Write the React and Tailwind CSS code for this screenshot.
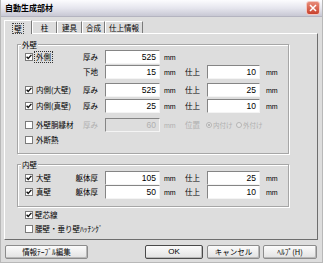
import React from "react";

const jp = "font-['Noto_Sans_CJK_JP',sans-serif]";
const lat = "font-['Liberation_Sans',Arial,sans-serif]";

function Check({ checked }) {
  return (
    <span className="w-[8px] h-[8px] shrink-0 bg-white border border-[#7a7a7a] flex items-center justify-center">
      {checked && (
        <svg width="6" height="6" viewBox="0 0 6 6">
          <path d="M0.6 2.7 L2.2 4.4 L5.4 0.9" fill="none" stroke="#111" strokeWidth="1.4" />
        </svg>
      )}
    </span>
  );
}

function Radio({ checked }) {
  return (
    <span className="w-[6px] h-[6px] shrink-0 rounded-full border border-[#b4b4b4] bg-[#e4e4e4] flex items-center justify-center">
      {checked && <span className="w-[2px] h-[2px] rounded-full bg-[#a8a8a8]" />}
    </span>
  );
}

function Field({ value, wide, disabled }) {
  return (
    <div
      className={`${wide ? "w-[55px]" : "w-[53px]"} h-[14px] shrink-0 border border-t-[#858585] border-l-[#858585] border-b-[#f4f4f4] border-r-[#f4f4f4] ${
        disabled ? "bg-[#dddddd] text-[#b0b0b0]" : "bg-white text-black"
      } flex items-center justify-end pr-[3px] text-[8.5px] leading-none ${lat}`}
    >
      {value}
    </div>
  );
}

function Mm({ gray, wide }) {
  return (
    <div className={`${wide ? "w-[25px] pl-[4px]" : "pl-[6px]"} text-[7px] leading-none ${lat} ${gray ? "text-[#b0b0b0]" : "text-black"}`}>
      mm
    </div>
  );
}

function CheckCell({ checked, label, focus, gray }) {
  return (
    <div className="w-[47px] shrink-0 flex items-center gap-[1px]">
      <Check checked={checked} />
      <span
        className={`whitespace-nowrap px-[1px] leading-[10px] border ${
          focus ? "border-dotted border-[#333]" : "border-transparent"
        } ${gray ? "text-[#a8a8a8]" : "text-black"}`}
      >
        {label}
      </span>
    </div>
  );
}

function Label({ text, gray }) {
  return (
    <div className={`w-[26px] shrink-0 text-right whitespace-nowrap leading-[10px] ${gray ? "text-[#b0b0b0]" : "text-black"}`}>
      {text}
    </div>
  );
}

function Row({ check, checked, label, focus, lbl, val, fin, className = "" }) {
  return (
    <div className={`flex items-center h-[14px] ${className}`}>
      {check ? <CheckCell checked={checked} label={label} focus={focus} /> : <div className="w-[47px] shrink-0" />}
      <Label text={lbl} />
      <div className="ml-[7px]">
        <Field value={val} wide />
      </div>
      <Mm wide />
      {fin !== undefined && (
        <>
          <div className="w-[22px] shrink-0 leading-[10px]">仕上</div>
          <Field value={fin} />
          <Mm />
        </>
      )}
    </div>
  );
}

function Group({ title, className = "", children }) {
  return (
    <div
      className={`relative ml-[12px] w-[272px] border border-[#a6a6a6] shadow-[inset_1px_1px_0_#ffffff,1px_1px_0_#ffffff] pl-[7px] ${className}`}
    >
      <span className="absolute left-[3px] -top-[6px] px-[1px] bg-[#dddddd] leading-[11px]">{title}</span>
      {children}
    </div>
  );
}

function Button({ children, w, def }) {
  return (
    <div
      className={`${w} h-[14px] shrink-0 flex items-center justify-center rounded-[2px] border ${
        def ? "border-[#4a4a4a]" : "border-[#8c8c8c]"
      } bg-linear-to-b from-[#fbfbfb] to-[#e2e2e2] shadow-[inset_-1px_-1px_0_#b8b8b8] text-[7.5px] leading-none`}
    >
      {children}
    </div>
  );
}

function Tab({ children, w, active }) {
  return active ? (
    <div
      className={`${w} h-[14px] -mb-[1px] relative z-10 bg-[#dddddd] border-t border-l border-r border-t-white border-l-white border-r-[#7a7a7a] flex items-start justify-center pt-[2px] leading-[10px]`}
    >
      <span className="border border-dotted border-[#444] px-[1px] leading-[9px]">{children}</span>
    </div>
  ) : (
    <div
      className={`${w} h-[12px] bg-[#dddddd] border-t border-l border-r border-t-white border-l-white border-r-[#7a7a7a] flex items-center justify-center leading-[10px]`}
    >
      {children}
    </div>
  );
}

export default function App() {
  return (
    <div className={`w-[323px] h-[263px] bg-[#dddddd] flex flex-col text-[7.5px] text-black ${jp} border-l border-r border-b border-[#b8b8b8] overflow-hidden`}>
      {/* Title bar */}
      <div className="h-[17px] shrink-0 flex items-center bg-linear-to-b from-[#fcfcfe] via-[#e6e6ee] to-[#c8c8d4] border-b border-[#b4b4c0]">
        <span className="ml-[4px] text-[8px] font-bold leading-none tracking-[0px]">自動生成部材</span>
        <div className="ml-auto mr-[2px] w-[14px] h-[14px] rounded-[3px] border border-[#f4c8c0] bg-linear-to-b from-[#e88a78] to-[#c8402c] flex items-center justify-center">
          <svg width="8" height="8" viewBox="0 0 8 8">
            <path d="M1 1 L7 7 M7 1 L1 7" stroke="white" strokeWidth="1.5" />
          </svg>
        </div>
      </div>

      {/* Tabs */}
      <div className="mt-[3px] h-[13px] shrink-0 flex items-end pl-[3px]">
        <Tab w="w-[28px]" active>
          壁
        </Tab>
        <Tab w="w-[25px]">柱</Tab>
        <Tab w="w-[25px]">建具</Tab>
        <Tab w="w-[23px]">合成</Tab>
        <Tab w="w-[38px]">仕上情報</Tab>
      </div>

      {/* Panel */}
      <div className="ml-[3px] w-[314px] h-[207px] shrink-0 border border-t-white border-l-white border-r-[#6e6e6e] border-b-[#6e6e6e] flex flex-col">
        <Group title="外壁" className="mt-[10px] pt-[5px] pb-[6px]">
          <Row check checked label="外側" focus lbl="厚み" val="525" />
          <Row className="mt-[1px]" lbl="下地" val="15" fin="10" />
          <Row className="mt-[4px]" check checked label="内側(大壁)" lbl="厚み" val="525" fin="25" />
          <Row className="mt-[2px]" check checked label="内側(真壁)" lbl="厚み" val="25" fin="10" />
          <div className="flex items-center h-[14px] mt-[5px]">
            <CheckCell label="外壁胴縁材" />
            <Label text="厚み" gray />
            <div className="ml-[7px]">
              <Field value="60" wide disabled />
            </div>
            <Mm wide gray />
            <div className="w-[21px] shrink-0 leading-[10px] text-[#b0b0b0]">位置</div>
            <div className="w-[30px] shrink-0 flex items-center gap-[1px]">
              <Radio checked />
              <span className="text-[#b0b0b0] leading-[10px] text-[6.5px] whitespace-nowrap">内付け</span>
            </div>
            <div className="flex items-center gap-[1px]">
              <Radio />
              <span className="text-[#b0b0b0] leading-[10px] text-[6.5px] whitespace-nowrap">外付け</span>
            </div>
          </div>
          <div className="flex items-center h-[14px] mt-[1px]">
            <CheckCell label="外断熱" />
          </div>
        </Group>

        <Group title="内壁" className="mt-[10px] pt-[6px] pb-[7px]">
          <Row check checked label="大壁" lbl="躯体厚" val="105" fin="25" />
          <Row check checked label="真壁" lbl="躯体厚" val="50" fin="10" />
        </Group>

        <div className="mt-[1px] pl-[20px] flex items-center h-[14px]">
          <div className="flex items-center gap-[1px]">
            <Check checked />
            <span className="px-[1px] leading-[10px]">壁芯線</span>
          </div>
        </div>
        <div className="pl-[20px] flex items-center h-[14px]">
          <div className="flex items-center gap-[1px]">
            <Check />
            <span className="px-[1px] leading-[10px] whitespace-nowrap">腰壁・垂り壁ﾊｯﾁﾝｸﾞ</span>
          </div>
        </div>
      </div>

      {/* Buttons */}
      <div className="mt-[5px] flex items-center">
        <div className="ml-[4px]">
          <Button w="w-[83px]">情報ﾃｰﾌﾞﾙ編集</Button>
        </div>
        <div className="ml-auto mr-[5px] flex items-center">
          <Button w="w-[58px]" def>
            <span className={`${lat} text-[8px]`}>OK</span>
          </Button>
          <div className="ml-[4px]">
            <Button w="w-[53px]">キャンセル</Button>
          </div>
          <div className="ml-[3px]">
            <Button w="w-[54px]">ﾍﾙﾌﾟ(H)</Button>
          </div>
        </div>
      </div>
    </div>
  );
}
